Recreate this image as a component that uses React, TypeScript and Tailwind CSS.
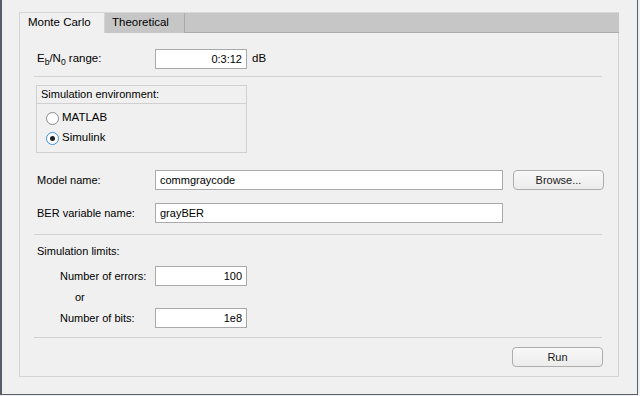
import React from "react";

function TextBox({ value, width, align = "left" }: { value: string; width: string; align?: "left" | "right" }) {
  return (
    <div
      className={`${width} h-[20px] bg-white border border-[#a9a9a9] flex items-center px-[4px] ${
        align === "right" ? "justify-end" : "justify-start"
      }`}
    >
      <span className="text-[11px] text-black leading-none">{value}</span>
    </div>
  );
}

function Button({ label }: { label: string }) {
  return (
    <div className="w-[91px] h-[20px] rounded-[4px] border border-[#adadad] bg-gradient-to-b from-[#f8f8f8] to-[#ececec] flex items-center justify-center">
      <span className="text-[11px] text-[#1a1a1a] leading-none">{label}</span>
    </div>
  );
}

function Radio({ label, checked }: { label: string; checked?: boolean }) {
  return (
    <div className="flex items-center h-[20px]">
      <div
        className={`w-[13px] h-[13px] rounded-full bg-white border flex items-center justify-center ${
          checked ? "border-[#3b8fe0]" : "border-[#8a8a8a]"
        }`}
      >
        {checked && <div className="w-[5px] h-[5px] rounded-full bg-[#222]" />}
      </div>
      <span className="ml-[3px] text-[11.5px] text-black">{label}</span>
    </div>
  );
}

function Separator() {
  return <div className="ml-[14px] mr-[16px] h-px bg-[#d2d2d2]" />;
}

export default function App() {
  return (
    <div className="w-[640px] h-[396px] bg-[#f0f0f0] overflow-hidden" style={{ fontFamily: '"Liberation Sans", Arial, sans-serif' }}>
      <div className="w-[638px] h-[395px] border-l-2 border-r border-b border-[#56606b] pl-[17px] pt-[12px]">
        {/* tab strip */}
        <div className="w-[600px] h-[21px] flex bg-[#c6c6c6] border-t border-[#d8d8d8]">
          <div className="w-[86px] h-[21px] -mt-px bg-[#f0f0f0] border-l border-t border-r border-[#d4d4d4] flex items-center pl-[8px]">
            <span className="text-[11.5px] text-black">Monte Carlo</span>
          </div>
          <div className="w-[80px] h-full border-r border-[#aaaaaa] flex items-center pl-[7px]">
            <span className="text-[11.5px] text-black">Theoretical</span>
          </div>
          <div className="flex-1 border-b border-[#aaaaaa]" />
        </div>

        {/* panel */}
        <div className="w-[600px] h-[344px] border-l border-r border-b border-[#d4d4d4] bg-[#f0f0f0] flex flex-col text-[11px]">
          <div className="mt-[16px] flex items-center h-[20px]">
            <div className="w-[135px] pl-[17px] text-[11.5px] text-black">
              E<sub className="text-[8.5px]">b</sub>/N<sub className="text-[8.5px]">0</sub> range:
            </div>
            <TextBox value="0:3:12" width="w-[92px]" align="right" />
            <span className="ml-[5px] text-[11.5px] text-black">dB</span>
          </div>

          <div className="mt-[7px]">
            <Separator />
          </div>

          <div className="mt-[8px] ml-[16px] w-[211px] h-[68px] border border-[#d0d0d0] flex flex-col">
            <div className="h-[18px] border-b border-[#d0d0d0] flex items-center pl-[4px]">
              <span className="text-[11px] text-black">Simulation environment:</span>
            </div>
            <div className="pl-[9px] pt-[4px] flex flex-col">
              <Radio label="MATLAB" />
              <Radio label="Simulink" checked />
            </div>
          </div>

          <div className="mt-[17px] flex items-center h-[20px]">
            <div className="w-[135px] pl-[17px] text-black">Model name:</div>
            <TextBox value="commgraycode" width="w-[348px]" />
            <div className="ml-[10px]">
              <Button label="Browse..." />
            </div>
          </div>

          <div className="mt-[13px] flex items-center h-[20px]">
            <div className="w-[135px] pl-[17px] text-black">BER variable name:</div>
            <TextBox value="grayBER" width="w-[348px]" />
          </div>

          <div className="mt-[11px]">
            <Separator />
          </div>

          <div className="mt-[8px] h-[16px] flex items-center pl-[17px] text-black">Simulation limits:</div>

          <div className="mt-[7px] flex items-center h-[20px]">
            <div className="w-[135px] pl-[40px] text-black">Number of errors:</div>
            <TextBox value="100" width="w-[92px]" align="right" />
          </div>
          <div className="h-[22px] flex items-center pl-[55px] text-black">or</div>
          <div className="flex items-center h-[20px]">
            <div className="w-[135px] pl-[40px] text-black">Number of bits:</div>
            <TextBox value="1e8" width="w-[92px]" align="right" />
          </div>

          <div className="mt-[9px]">
            <Separator />
          </div>

          <div className="mt-[9px] flex justify-end pr-[15px]">
            <Button label="Run" />
          </div>
        </div>
      </div>
    </div>
  );
}
